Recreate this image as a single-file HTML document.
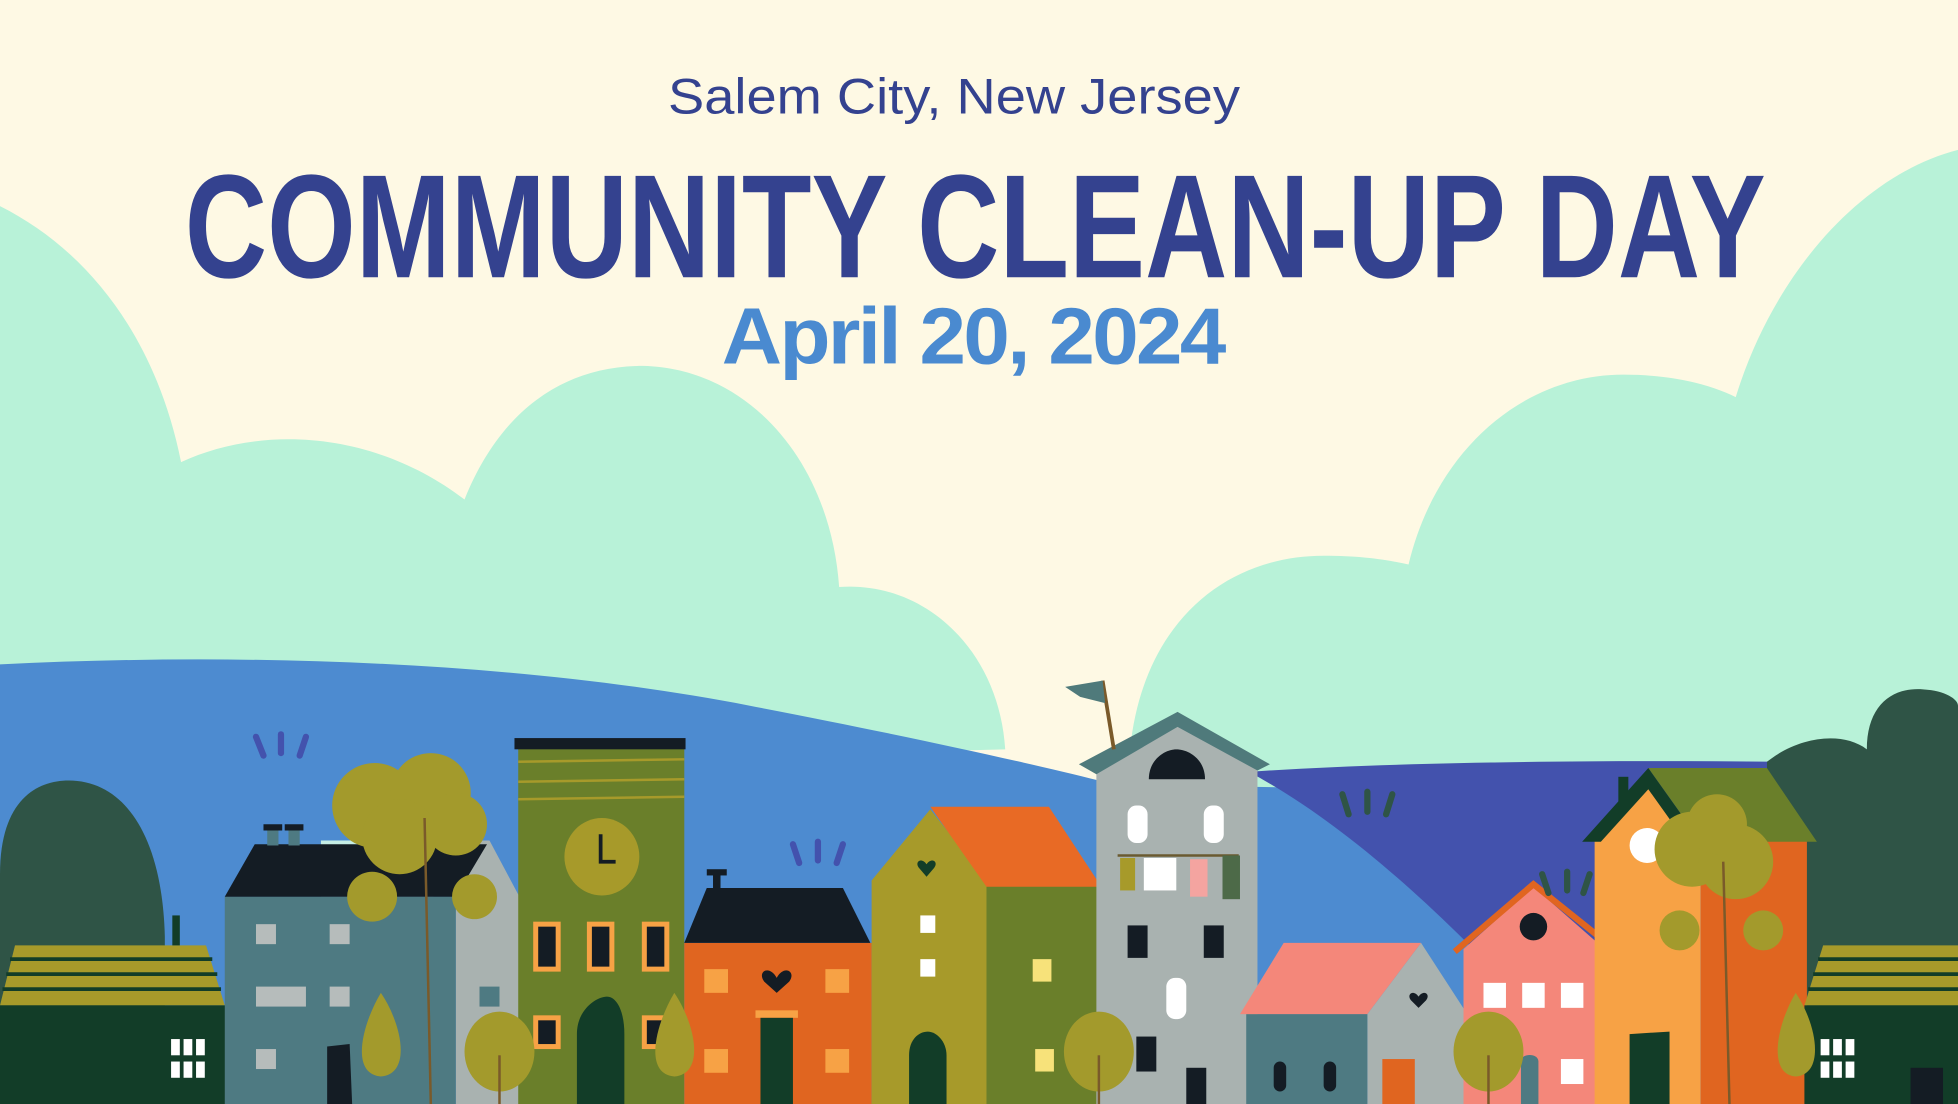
<!DOCTYPE html>
<html><head><meta charset="utf-8"><style>
html,body{margin:0;padding:0;width:1958px;height:1104px;overflow:hidden;background:#fef9e4}
svg{display:block}
</style></head><body>
<svg width="1958" height="1104" viewBox="0 0 1568 884" preserveAspectRatio="none" xmlns="http://www.w3.org/2000/svg">
<rect width="1568" height="884" fill="#fef9e4"/>
<path fill="#b8f2d8" d="M0 165 C70 200 125 270 145 370 C210 340 300 345 372 400 C400 330 450 293 515 293 C600 295 665 370 672 470 C740 465 800 520 805 600 L0 620 Z"/>
<path fill="#b8f2d8" d="M905 600 C915 500 980 445 1060 445 C1090 445 1110 448 1128 452 C1150 360 1220 300 1300 300 C1340 300 1370 308 1390 318 C1420 220 1490 140 1568 120 L1568 640 L905 640 Z"/>
<path fill="#4d8bd0" d="M0 532 C200 522 420 530 600 565 C720 588 820 610 880 625 L1000 630 L1568 640 L1568 884 L0 884 Z"/>
<path fill="#4352ad" d="M1000 618 C1150 608 1350 608 1568 612 L1568 884 L1180 884 L1180 760 C1120 700 1060 650 1000 618 Z"/>
<path fill="#2f5446" d="M0 700 C0 640 30 625 55 625 C100 625 130 670 132 750 L132 884 L0 884 Z"/>
<path fill="#2f5446" d="M1415 610 C1440 590 1475 585 1495 600 C1495 565 1515 550 1540 552 C1558 553 1568 560 1568 565 L1568 884 L1415 884 Z"/>
<polygon points="12,757 165,757 180,805 0,805" fill="#a79a2a"/>
<g stroke="#123d28" stroke-width="3"><line x1="8" y1="768" x2="170" y2="768"/><line x1="5" y1="780" x2="174" y2="780"/><line x1="2" y1="792" x2="177" y2="792"/></g>
<rect x="0" y="805" width="182" height="79" fill="#123d28"/>
<rect x="138" y="733" width="6" height="24" fill="#123d28"/>
<g fill="#fff"><rect x="137" y="832" width="7" height="13"/><rect x="147" y="832" width="7" height="13"/><rect x="157" y="832" width="7" height="13"/><rect x="137" y="850" width="7" height="13"/><rect x="147" y="850" width="7" height="13"/><rect x="157" y="850" width="7" height="13"/></g>
<rect x="257" y="673" width="90" height="45" fill="#c5ede5"/>
<polygon points="365,718 365,673 392,673 417,720 417,884 365,884" fill="#a9b2b0"/>
<rect x="180" y="718" width="185" height="166" fill="#4e7a82"/>
<polygon points="204,676 390,676 365,718 180,718" fill="#141c24"/>
<rect x="214" y="663" width="9" height="14" fill="#4e7a82"/><rect x="211" y="660" width="15" height="5" fill="#141c24"/>
<rect x="231" y="663" width="9" height="14" fill="#4e7a82"/><rect x="228" y="660" width="15" height="5" fill="#141c24"/>
<g fill="#b6bcbb"><rect x="205" y="740" width="16" height="16"/><rect x="264" y="740" width="16" height="16"/><rect x="205" y="790" width="40" height="16"/><rect x="264" y="790" width="16" height="16"/><rect x="205" y="840" width="16" height="16"/></g>
<rect x="384" y="790" width="16" height="16" fill="#4e7a82"/>
<polygon points="262,838 280,836 282,884 262,884" fill="#141c24"/>
<rect x="415" y="597" width="133" height="287" fill="#6a7f2a"/>
<rect x="412" y="591" width="137" height="9" fill="#141c24"/>
<g stroke="#a79a2a" stroke-width="2"><line x1="415" y1="610" x2="548" y2="608"/><line x1="415" y1="626" x2="548" y2="624"/><line x1="415" y1="640" x2="548" y2="638"/></g>
<ellipse cx="482" cy="686" rx="30" ry="31" fill="#a79a2a"/>
<path d="M481 668 V690 H493" stroke="#141c24" stroke-width="3" fill="none"/>
<g fill="#f7a245"><rect x="427" y="738" width="22" height="40"/><rect x="470" y="738" width="22" height="40"/><rect x="514" y="738" width="22" height="40"/><rect x="427" y="813" width="22" height="27"/><rect x="514" y="813" width="22" height="27"/></g>
<g fill="#141c24"><rect x="431" y="742" width="14" height="32"/><rect x="474" y="742" width="14" height="32"/><rect x="518" y="742" width="14" height="32"/><rect x="431" y="817" width="14" height="19"/><rect x="518" y="817" width="14" height="19"/></g>
<path d="M462 884 V828 C462 808 478 798 486 798 C494 798 500 810 500 828 V884 Z" fill="#123d28"/>
<rect x="548" y="755" width="150" height="129" fill="#e06520"/>
<polygon points="566,711 675,711 697,755 548,755" fill="#141c24"/>
<rect x="571" y="700" width="6" height="12" fill="#141c24"/><rect x="566" y="696" width="16" height="5" fill="#141c24"/>
<path d="M622 783 C616 772 606 778 612 786 L622 795 L632 786 C638 778 628 772 622 783Z" fill="#141c24"/>
<g fill="#f7a245"><rect x="564" y="776" width="19" height="19"/><rect x="661" y="776" width="19" height="19"/><rect x="564" y="840" width="19" height="19"/><rect x="661" y="840" width="19" height="19"/><rect x="605" y="809" width="34" height="6"/></g>
<rect x="609" y="815" width="26" height="69" fill="#123d28"/>
<polygon points="698,705 745,648 790,705 790,884 698,884" fill="#a79a2a"/>
<rect x="790" y="705" width="92" height="179" fill="#6a7f2a"/>
<polygon points="745,646 840,646 882,710 790,710" fill="#e86a25"/>
<path d="M742 692 C738 686 732 690 736 695 L742 702 L748 695 C752 690 746 686 742 692Z" fill="#123d28"/>
<g fill="#fff"><rect x="737" y="733" width="12" height="14"/><rect x="737" y="768" width="12" height="14"/></g>
<g fill="#f7e27a"><rect x="827" y="768" width="15" height="18"/><rect x="829" y="840" width="15" height="18"/></g>
<path d="M728 884 V845 C728 832 736 826 743 826 C750 826 758 834 758 845 V884Z" fill="#123d28"/>
<polygon points="878,612 943,575 1007,612 1007,884 878,884" fill="#a9b2b0"/>
<polygon points="864,612 943,570 1017,612 1007,617 943,582 878,620" fill="#4f7a7b"/>
<path d="M920 624 C920 608 933 600 942 600 C952 600 965 608 965 624Z" fill="#141c24"/>
<g fill="#fff"><rect x="903" y="645" width="16" height="30" rx="7"/><rect x="964" y="645" width="16" height="30" rx="7"/><rect x="934" y="783" width="16" height="33" rx="7"/></g>
<path d="M895 685 L992 685" stroke="#6a5a30" stroke-width="2"/>
<g><rect x="897" y="687" width="12" height="26" fill="#a79a2a"/><rect x="916" y="687" width="26" height="26" fill="#fff"/><rect x="953" y="688" width="14" height="30" fill="#f4a4a0"/><rect x="979" y="685" width="14" height="35" fill="#4d6a48"/></g>
<g fill="#141c24"><rect x="903" y="741" width="16" height="26"/><rect x="964" y="741" width="16" height="26"/><rect x="910" y="830" width="16" height="28"/><rect x="950" y="855" width="16" height="29"/></g>
<line x1="883" y1="545" x2="892" y2="600" stroke="#7a5a2a" stroke-width="3"/>
<polygon points="853,550 883,545 885,563 865,558" fill="#4f7a7b"/>
<polygon points="1095,812 1138,755 1175,812 1175,884 1095,884" fill="#a9b2b0"/>
<rect x="998" y="812" width="97" height="72" fill="#4e7a82"/>
<polygon points="1028,755 1138,755 1095,812 993,812" fill="#f4877a"/>
<path d="M1136 798 C1132 792 1126 796 1130 801 L1136 807 L1142 801 C1146 796 1140 792 1136 798Z" fill="#141c24"/>
<rect x="1107" y="848" width="26" height="36" fill="#e06520"/>
<g fill="#141c24"><rect x="1020" y="850" width="10" height="24" rx="5"/><rect x="1060" y="850" width="10" height="24" rx="5"/></g>
<polygon points="1172,760 1228,710 1285,760 1285,884 1172,884" fill="#f4877a"/>
<polyline points="1165,762 1228,708 1298,764" fill="none" stroke="#e06520" stroke-width="5"/>
<circle cx="1228" cy="742" r="11" fill="#141c24"/>
<g fill="#fff"><rect x="1188" y="787" width="18" height="20"/><rect x="1219" y="787" width="18" height="20"/><rect x="1250" y="787" width="18" height="20"/><rect x="1250" y="848" width="18" height="20"/></g>
<path d="M1218 884 V850 C1218 843 1232 843 1232 850 V884Z" fill="#4e7a82"/>
<polygon points="1277,672 1320,628 1362,672 1362,884 1277,884" fill="#f7a245"/>
<rect x="1362" y="672" width="85" height="212" fill="#e06520"/>
<polygon points="1320,615 1415,615 1455,674 1362,674" fill="#6a7f2a"/>
<polygon points="1267,674 1320,615 1362,674 1350,674 1320,632 1282,674" fill="#123d28"/>
<rect x="1296" y="622" width="8" height="24" fill="#123d28"/>
<circle cx="1319" cy="677" r="14" fill="#fff"/>
<path d="M1305 828 L1337 826 L1337 884 L1305 884Z" fill="#123d28"/>
<polygon points="1460,757 1568,757 1568,805 1445,805" fill="#a79a2a"/>
<g stroke="#123d28" stroke-width="3"><line x1="1456" y1="768" x2="1568" y2="768"/><line x1="1452" y1="780" x2="1568" y2="780"/><line x1="1448" y1="792" x2="1568" y2="792"/></g>
<rect x="1445" y="805" width="123" height="79" fill="#123d28"/>
<g fill="#fff"><rect x="1458" y="832" width="7" height="13"/><rect x="1468" y="832" width="7" height="13"/><rect x="1478" y="832" width="7" height="13"/><rect x="1458" y="850" width="7" height="13"/><rect x="1468" y="850" width="7" height="13"/><rect x="1478" y="850" width="7" height="13"/></g>
<rect x="1530" y="855" width="26" height="29" fill="#141c24"/>
<g fill="#a39a2c">
<circle cx="300" cy="645" r="34"/><circle cx="345" cy="635" r="32"/><circle cx="365" cy="660" r="25"/><circle cx="320" cy="670" r="30"/>
<circle cx="298" cy="718" r="20"/><circle cx="380" cy="718" r="18"/>
<ellipse cx="400" cy="842" rx="28" ry="32"/><path d="M305 795 C290 820 280 860 305 862 C330 860 322 820 305 795Z"/>
<path d="M540 795 C525 820 515 860 540 862 C565 860 557 820 540 795Z"/>
<ellipse cx="880" cy="842" rx="28" ry="32"/>
<ellipse cx="1192" cy="842" rx="28" ry="32"/>
<circle cx="1355" cy="680" r="30"/><circle cx="1390" cy="690" r="30"/><circle cx="1375" cy="660" r="24"/>
<circle cx="1345" cy="745" r="16"/><circle cx="1412" cy="745" r="16"/>
<path d="M1438 795 C1423 820 1415 860 1438 862 C1462 860 1455 820 1438 795Z"/>
</g>
<g stroke="#7a5a2a" stroke-width="2" fill="none">
<line x1="340" y1="655" x2="345" y2="884"/><line x1="1380" y1="690" x2="1385" y2="884"/>
<line x1="400" y1="845" x2="400" y2="884"/><line x1="880" y1="845" x2="880" y2="884"/><line x1="1192" y1="845" x2="1192" y2="884"/>
</g>
<g stroke="#4352ad" stroke-width="5" stroke-linecap="round">
<line x1="205" y1="590" x2="211" y2="605"/><line x1="225" y1="588" x2="225" y2="603"/><line x1="245" y1="590" x2="240" y2="605"/>
<line x1="635" y1="676" x2="640" y2="691"/><line x1="655" y1="674" x2="655" y2="689"/><line x1="675" y1="676" x2="670" y2="691"/>
</g>
<g stroke="#2f5446" stroke-width="5" stroke-linecap="round">
<line x1="1075" y1="636" x2="1080" y2="652"/><line x1="1095" y1="634" x2="1095" y2="650"/><line x1="1115" y1="636" x2="1110" y2="652"/>
<line x1="1235" y1="700" x2="1240" y2="715"/><line x1="1255" y1="698" x2="1255" y2="713"/><line x1="1273" y1="700" x2="1268" y2="715"/>
</g>
<text x="764" y="91" text-anchor="middle" font-family="Liberation Sans, sans-serif" font-size="40" fill="#34428f" textLength="458" lengthAdjust="spacingAndGlyphs">Salem City, New Jersey</text>
<text x="781" y="222" text-anchor="middle" font-family="Liberation Sans, sans-serif" font-weight="bold" font-size="118" fill="#34428f" textLength="1266" lengthAdjust="spacingAndGlyphs">COMMUNITY CLEAN-UP DAY</text>
<text x="779" y="291" text-anchor="middle" font-family="Liberation Sans, sans-serif" font-weight="bold" font-size="64" fill="#4a8ad0" textLength="402" lengthAdjust="spacingAndGlyphs" letter-spacing="-2">April 20, 2024</text>
</svg>
</body></html>
